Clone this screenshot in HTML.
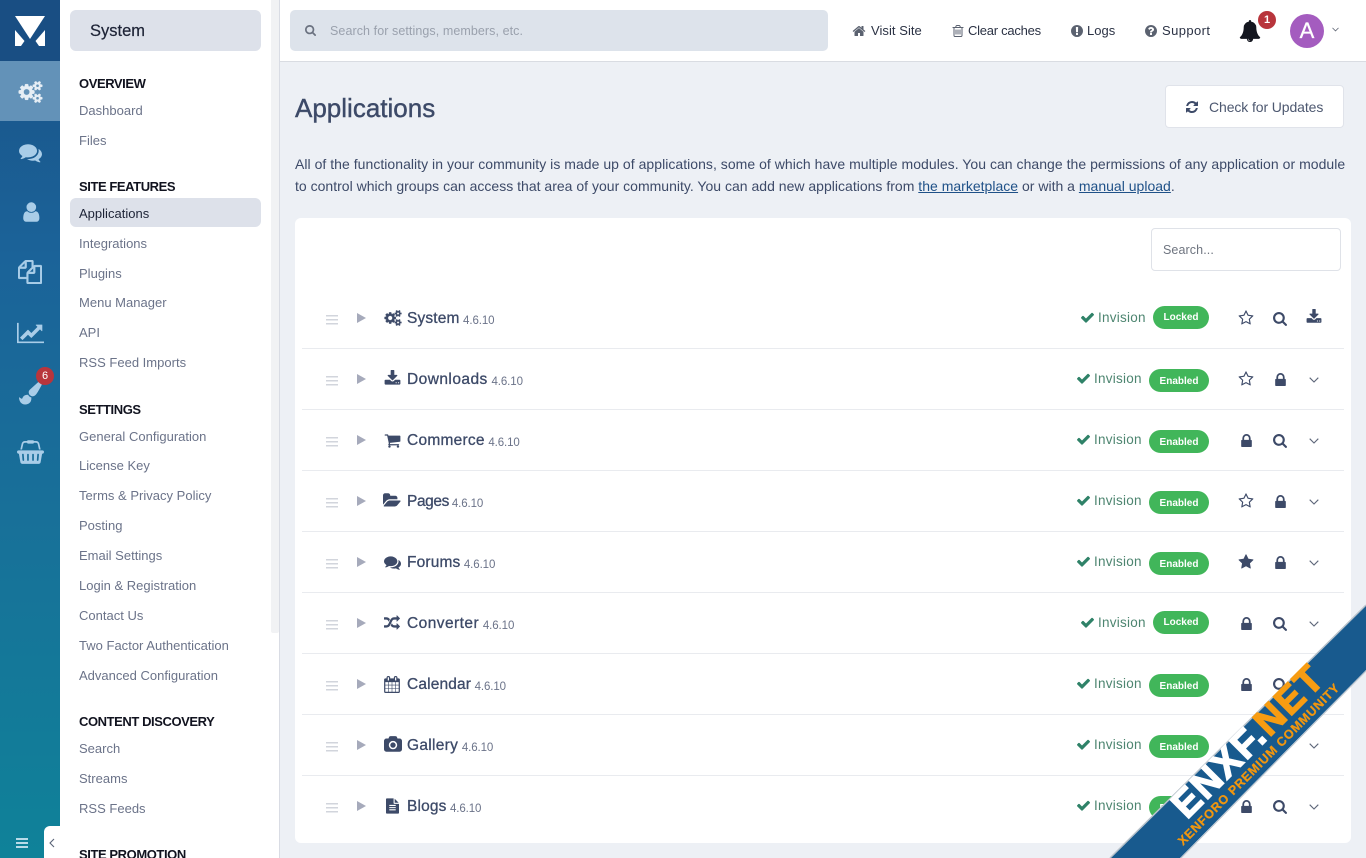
<!DOCTYPE html>
<html lang="en"><head><meta charset="utf-8"><title>Applications</title>
<style>
*{box-sizing:border-box}
html,body{margin:0;padding:0;width:1366px;height:858px;overflow:hidden;background:#edf0f5;font-family:"Liberation Sans",sans-serif;color:#3d4a68}
.a{position:absolute;white-space:nowrap}
#rail{position:absolute;left:0;top:0;width:60px;height:858px;background:linear-gradient(180deg,#1a5287 0,#1b6399 30%,#187099 60%,#0f8299 100%)}
#logo{position:absolute;left:0;top:0;width:60px;height:61px;background:#194e83}
#act{position:absolute;left:0;top:61px;width:60px;height:60px;background:#6392b8}
#side{position:absolute;left:60px;top:0;width:220px;height:858px;background:#fff;border-right:1px solid #d9dce4;overflow:hidden}
.h{position:absolute;left:19px;font-size:13px;line-height:22px;font-weight:bold;color:#11131f;white-space:nowrap;letter-spacing:-.42px}
.l{position:absolute;left:19px;font-size:13px;line-height:20px;color:#6b7389;white-space:nowrap;letter-spacing:.01px}
#top{position:absolute;left:280px;top:0;width:1086px;height:62px;background:#fff;border-bottom:1px solid #d9dce2}
.t{position:absolute;top:21px;font-size:13px;line-height:20px;color:#2b3244;white-space:nowrap}
svg.i{position:absolute;display:block}
#panel{position:absolute;left:295px;top:218px;width:1056px;height:625px;background:#fff;border-radius:6px}
.sep{position:absolute;left:302px;width:1042px;height:1px;background:#e9ebef}
.n{position:absolute;left:407px;font-size:15.5px;line-height:22px;color:#3d4a68;white-space:nowrap;-webkit-text-stroke:.3px #3d4a68;letter-spacing:.15px;word-spacing:-1px}
.n small{font-size:11.5px;color:#6b7389;-webkit-text-stroke:0;letter-spacing:-.1px;position:relative;top:1px}
.v{position:absolute;font-size:13.5px;line-height:20px;color:#4d8570;white-space:nowrap;letter-spacing:.25px}
.p{position:absolute;height:23px;border-radius:12px;background:#41b65a;color:#fff;font-size:10px;font-weight:bold;line-height:23px;text-align:center}
.e{left:1149px;width:60px;padding-top:1px}
.k{left:1153px;width:56px}
a{color:#1f5188}
</style></head><body>
<svg width="0" height="0" style="position:absolute"><defs>
<symbol id="cogs" viewBox="0 0 2048 1792"><path d="M960 896q0-106-75-181t-181-75-181 75-75 181 75 181 181 75 181-75 75-181zm768 512q0-52-38-90t-90-38-90 38-38 90q0 53 37.500 90.500t90.500 37.500 90.500-37.500 37.500-90.500zm0-1024q0-52-38-90t-90-38-90 38-38 90q0 53 37.500 90.500t90.500 37.500 90.500-37.500 37.500-90.500zm-384 421v185q0 10-7 19.500t-16 10.500l-155 24q-11 35-32 76 34 48 90 115 7 11 7 20 0 12-7 19-23 30-82.500 89.500t-78.500 59.500q-11 0-21-7l-115-90q-37 19-77 31-11 108-23 155-7 24-30 24h-186q-11 0-20-7.500t-10-17.500l-23-153q-34-10-75-31l-118 89q-7 7-20 7-11 0-21-8-144-133-144-160 0-9 7-19 10-14 41-53t47-61q-23-44-35-82l-152-24q-10-1-17-9.500t-7-19.500v-185q0-10 7-19.500t16-10.500l155-24q11-35 32-76-34-48-90-115-7-11-7-20 0-12 7-20 22-30 82-89t79-59q11 0 21 7l115 90q34-18 77-32 11-108 23-154 7-24 30-24h186q11 0 20 7.500t10 17.500l23 153q34 10 75 31l118-89q8-7 20-7 11 0 21 8 144 133 144 160 0 8-7 19-12 16-42 54t-45 60q23 48 34 82l152 23q10 2 17 10.500t7 19.500zm640 533v140q0 16-149 31-12 27-30 52 51 113 51 138 0 4-4 7-122 71-124 71-8 0-46-47t-52-68q-20 2-30 2t-30-2q-14 21-52 68t-46 47q-2 0-124-71-4-3-4-7 0-25 51-138-18-25-30-52-149-15-149-31v-140q0-16 149-31 13-29 30-52-51-113-51-138 0-4 4-7 4-2 35-20t59-34 30-16q8 0 46 46.500t52 67.500q20-2 30-2t30 2q51-71 92-112l6-2q4 0 124 70 4 3 4 7 0 25-51 138 17 23 30 52 149 15 149 31zm0-1024v140q0 16-149 31-12 27-30 52 51 113 51 138 0 4-4 7-122 71-124 71-8 0-46-47t-52-68q-20 2-30 2t-30-2q-14 21-52 68t-46 47q-2 0-124-71-4-3-4-7 0-25 51-138-18-25-30-52-149-15-149-31v-140q0-16 149-31 13-29 30-52-51-113-51-138 0-4 4-7 4-2 35-20t59-34 30-16q8 0 46 46.500t52 67.500q20-2 30-2t30 2q51-71 92-112l6-2q4 0 124 70 4 3 4 7 0 25-51 138 17 23 30 52 149 15 149 31z"/></symbol>
<symbol id="comments" viewBox="0 0 1792 1792"><path d="M1408 768q0 139-94 257t-256.500 186.500-353.500 68.500q-86 0-176-16-124 88-278 128-36 9-86 16h-3q-11 0-20.500-8t-11.500-21q-1-3-1-6.500t.5-6.500 2-6l2.500-5 3.500-5.500 4-5 4.500-5 4-4.500q5-6 23-25t26-29.500 22.500-29 25-38.500 20.500-44q-124-72-195-177t-71-224q0-139 94-257t256.500-186.500 353.500-68.500 353.500 68.500 256.500 186.500 94 257zm384 256q0 120-71 224.500t-195 176.500q10 24 20.500 44t25 38.500 22.500 29 26 29.500 23 25q1 1 4 4.500t4.500 5 4 5 3.500 5.500l2.500 5 2 6 .5 6.500-1 6.500q-3 14-13 22t-22 7q-50-7-86-16-154-40-278-128-90 16-176 16-271 0-472-132 58 4 88 4 161 0 309-45t264-129q125-92 192-212t67-254q0-77-23-152 129 71 204 178t75 230z"/></symbol>
<symbol id="user" viewBox="0 0 1664 1792"><path d="M1536 1399q0 109-62.500 187t-150.500 78h-854q-88 0-150.500-78t-62.500-187q0-85 8.500-160.500t31.500-152 58.500-131 94-89 134.500-34.500q131 128 313 128t313-128q76 0 134.500 34.500t94 89 58.500 131 31.500 152 8.500 160.500zm-256-887q0 159-112.500 271.500t-271.500 112.500-271.500-112.500-112.500-271.500 112.500-271.500 271.500-112.500 271.500 112.500 112.500 271.500z"/></symbol>
<symbol id="files" viewBox="0 0 1792 1792"><path d="M1696 384q40 0 68 28t28 68v1216q0 40-28 68t-68 28h-960q-40 0-68-28t-28-68v-288h-544q-40 0-68-28t-28-68v-672q0-40 20-88t48-76l408-408q28-28 76-48t88-20h416q40 0 68 28t28 68v328q68-40 128-40h416zm-544 213l-299 299h299v-299zm-640-384l-299 299h299v-299zm196 647l316-316v-416h-384v416q0 40-28 68t-68 28h-416v640h512v-256q0-40 20-88t48-76zm956 804v-1152h-384v416q0 40-28 68t-68 28h-416v640h896z"/></symbol>
<symbol id="chart" viewBox="0 0 2048 1792"><path d="M2048 1536v128h-2048v-1536h128v1408h1920zm-128-1248v435q0 21-19.500 29.500t-35.500-7.500l-121-121-633 633q-10 10-23 10t-23-10l-233-233-416 416-192-192 585-585q10-10 23-10t23 10l233 233 464-464-121-121q-16-16-7.500-35.500t29.500-19.500h435q14 0 23 9t9 23z"/></symbol>
<symbol id="brush" viewBox="0 0 1792 1792"><path d="M1615 0q70 0 122.500 46.500t52.500 116.500q0 63-45 151-332 629-465 752-97 91-218 91-126 0-216.500-92.500t-90.500-219.500q0-128 92-212l638-579q59-54 130-54zm-909 1034q39 76 106.500 130t150.500 76l1 71q4 213-129.500 347t-348.500 134q-123 0-218-46.500t-152.500-127.500-86.500-183-29-220q7 5 41 30t62 44.500 59 36.500 46 17q41 0 55-37 25-66 57.500-112.500t69.500-76 88-47.500 103-25.500 125-10.500z"/></symbol>
<symbol id="basket" viewBox="0 0 2048 1792"><path d="M1920 768q53 0 90.500 37.500t37.500 90.500-37.500 90.500-90.500 37.500h-15l-115 662q-8 46-44 76t-82 30h-1280q-46 0-82-30t-44-76l-115-662h-15q-53 0-90.500-37.500t-37.500-90.500 37.500-90.500 90.500-37.500h1792zm-1435 800q26-2 43.500-22.500t15.500-46.500l-32-416q-2-26-22.500-43.500t-46.500-15.500-43.500 22.500-15.500 46.500l32 416q2 25 20.500 42t43.500 17h5zm411-64v-416q0-26-19-45t-45-19-45 19-19 45v416q0 26 19 45t45 19 45-19 19-45zm384 0v-416q0-26-19-45t-45-19-45 19-19 45v416q0 26 19 45t45 19 45-19 19-45zm352 5l32-416q2-26-15.500-46.500t-43.500-22.500-46.500 15.500-22.500 43.500l-32 416q-2 26 15.500 46.500t43.500 22.500h5q25 0 43.500-17t20.500-42zm-1156-1217l-93 412h-132l101-441q19-88 89-143.500t160-55.500h167q0-26 19-45t45-19h384q26 0 45 19t19 45h167q90 0 160 55.500t89 143.500l101 441h-132l-93-412q-11-44-45.500-72t-79.500-28h-167q0 26-19 45t-45 19h-384q-26 0-45-19t-19-45h-167q-45 0-79.500 28t-45.500 72z"/></symbol>
<symbol id="search" viewBox="0 0 1664 1664"><path d="M1152 704q0-185-131.500-316.500t-316.500-131.500-316.500 131.500-131.500 316.500 131.500 316.500 316.500 131.500 316.500-131.500 131.500-316.500zm512 832q0 52-38 90t-90 38q-54 0-90-38l-343-342q-179 124-399 124-143 0-273.500-55.500t-225-150-150-225-55.500-273.500 55.500-273.500 150-225 225-150 273.500-55.500 273.500 55.500 225 150 150 225 55.500 273.500q0 220-124 399l343 343q37 37 37 90z"/></symbol>
<symbol id="lock" viewBox="320 128 1152 1408"><path d="M640 768h512v-192q0-106-75-181t-181-75-181 75-75 181v192zm832 96v576q0 40-28 68t-68 28h-960q-40 0-68-28t-28-68v-576q0-40 28-68t68-28h32v-192q0-184 132-316t316-132 316 132 132 316v192h32q40 0 68 28t28 68z"/></symbol>
<symbol id="star" viewBox="0 0 1792 1792"><path d="M1728 647q0 22-26 48l-363 354 86 500q1 7 1 20 0 21-10.500 35.500t-30.500 14.500q-19 0-40-12l-449-236-449 236q-22 12-40 12-21 0-31.500-14.500t-10.500-35.500q0-6 2-20l86-500-364-354q-25-27-25-48 0-37 56-46l502-73 225-455q19-41 49-41t49 41l225 455 502 73q56 9 56 46z"/></symbol>
<symbol id="staro" viewBox="0 0 1792 1792"><path d="M1201 1004l306-297-422-62-189-382-189 382-422 62 306 297-73 421 378-199 377 199zm527-357q0 22-26 48l-363 354 86 500q1 7 1 20 0 50-41 50-19 0-40-12l-449-236-449 236q-22 12-40 12-21 0-31.500-14.500t-10.500-35.500q0-6 2-20l86-500-364-354q-25-27-25-48 0-37 56-46l502-73 225-455q19-41 49-41t49 41l225 455 502 73q56 9 56 46z"/></symbol>
<symbol id="check" viewBox="0 0 1792 1792"><path d="M1671 566q0 40-28 68l-724 724-136 136q-28 28-68 28t-68-28l-136-136-362-362q-28-28-28-68t28-68l136-136q28-28 68-28t68 28l294 295 656-657q28-28 68-28t68 28l136 136q28 28 28 68z"/></symbol>
<symbol id="dl" viewBox="0 0 1792 1792"><path d="M1344 1344q0-26-19-45t-45-19-45 19-19 45 19 45 45 19 45-19 19-45zm256 0q0-26-19-45t-45-19-45 19-19 45 19 45 45 19 45-19 19-45zm128-224v320q0 40-28 68t-68 28h-1472q-40 0-68-28t-28-68v-320q0-40 28-68t68-28h465l135 136q58 56 136 56t136-56l136-136h464q40 0 68 28t28 68zm-325-569q17 41-14 70l-448 448q-18 19-45 19t-45-19l-448-448q-31-29-14-70 17-39 59-39h256v-448q0-26 19-45t45-19h256q26 0 45 19t19 45v448h256q42 0 59 39z"/></symbol>
<symbol id="cart" viewBox="0 0 1792 1792"><path d="M704 1536q0 52-38 90t-90 38-90-38-38-90 38-90 90-38 90 38 38 90zm896 0q0 52-38 90t-90 38-90-38-38-90 38-90 90-38 90 38 38 90zm128-1088v512q0 24-16.500 42.500t-40.500 21.500l-1044 122q13 60 13 70 0 16-24 64h920q26 0 45 19t19 45-19 45-45 19h-1024q-26 0-45-19t-19-45q0-11 8-31.500t16-36 21.500-40 15.500-29.500l-177-823h-204q-26 0-45-19t-19-45 19-45 45-19h256q16 0 28.500 6.500t19.500 15.500 13 24.500 8 26 5.500 29.500 4.500 26h1201q26 0 45 19t19 45z"/></symbol>
<symbol id="folder" viewBox="0 0 1920 1792"><path d="M1879 952q0 31-31 66l-336 396q-43 51-120.500 86.500t-143.500 35.500h-1088q-34 0-60.500-13t-26.500-43q0-31 31-66l336-396q43-51 120.500-86.500t143.500-35.500h1088q34 0 60.500 13t26.500 43zm-343-344v160h-832q-94 0-197 47.500t-164 119.500l-337 396-5 6q0-4-.5-12.500t-.5-12.500v-960q0-92 66-158t158-66h320q92 0 158 66t66 158v32h544q92 0 158 66t66 158z"/></symbol>
<symbol id="random" viewBox="0 0 1792 1792"><path d="M666 481q-60 92-137 273-22-45-37-72.500t-40.500-63.500-51-56.500-63-35-81.500-14.500h-224q-14 0-23-9t-9-23v-192q0-14 9-23t23-9h224q250 0 410 225zm1126 799q0 14-9 23l-320 320q-9 9-23 9-13 0-22.500-9.500t-9.500-22.500v-192q-32 0-85 .5t-81 1-73-1-71-5-64-10.500-63-18.500-58-28.500-59-40-55-53.500-56-69.500q59-93 136-273 22 45 37 72.500t40.500 63.500 51 56.500 63 35 81.500 14.500h256v-192q0-14 9-23t23-9q12 0 24 10l319 319q9 9 9 23zm0-896q0 14-9 23l-320 320q-9 9-23 9-13 0-22.500-9.500t-9.500-22.500v-192h-256q-48 0-87 15t-69 45-51 61.500-45 77.500q-32 62-78 171-29 66-49.500 111t-54 105-64 100-74 83-90 68.500-106.500 42-128 16.500h-224q-14 0-23-9t-9-23v-192q0-14 9-23t23-9h224q48 0 87-15t69-45 51-61.500 45-77.500q32-62 78-171 29-66 49.500-111t54-105 64-100 74-83 90-68.500 106.500-42 128-16.500h256v-192q0-14 9-23t23-9q12 0 24 10l319 319q9 9 9 23z"/></symbol>
<symbol id="cal" viewBox="0 0 1664 1792"><path d="M128 1664h288v-288h-288v288zm352 0h320v-288h-320v288zm-352-352h288v-320h-288v320zm352 0h320v-320h-320v320zm-352-384h288v-288h-288v288zm736 736h320v-288h-320v288zm-384-736h320v-288h-320v288zm768 736h288v-288h-288v288zm-384-352h320v-320h-320v320zm-352-864v-288q0-13-9.500-22.500t-22.500-9.500h-64q-13 0-22.500 9.500t-9.500 22.500v288q0 13 9.500 22.500t22.500 9.500h64q13 0 22.500-9.500t9.500-22.500zm736 864h288v-320h-288v320zm-384-384h320v-288h-320v288zm384 0h288v-288h-288v288zm32-480v-288q0-13-9.500-22.500t-22.500-9.500h-64q-13 0-22.500 9.500t-9.500 22.500v288q0 13 9.500 22.500t22.500 9.500h64q13 0 22.500-9.500t9.500-22.500zm384-64v1280q0 52-38 90t-90 38h-1408q-52 0-90-38t-38-90v-1280q0-52 38-90t90-38h128v-96q0-66 47-113t113-47h64q66 0 113 47t47 113v96h384v-96q0-66 47-113t113-47h64q66 0 113 47t47 113v96h128q52 0 90 38t38 90z"/></symbol>
<symbol id="camera" viewBox="0 0 1920 1792"><path d="M960 672q119 0 203.500 84.500t84.500 203.500-84.500 203.500-203.500 84.500-203.500-84.500-84.500-203.500 84.500-203.500 203.500-84.500zm704-416q106 0 181 75t75 181v896q0 106-75 181t-181 75h-1408q-106 0-181-75t-75-181v-896q0-106 75-181t181-75h224l51-136q19-49 69.500-84.500t103.500-35.500h512q53 0 103.500 35.500t69.500 84.500l51 136h224zm-704 1152q185 0 316.500-131.500t131.500-316.500-131.500-316.500-316.500-131.500-316.500 131.500-131.500 316.500 131.500 316.500 316.500 131.500z"/></symbol>
<symbol id="file" viewBox="128 0 1536 1792"><path d="M1596 476q14 14 28 36h-472v-472q22 14 36 28zm-476 164h544v1056q0 40-28 68t-68 28h-1344q-40 0-68-28t-28-68v-1600q0-40 28-68t68-28h800v544q0 40 28 68t68 28zm160 736v-64q0-14-9-23t-23-9h-704q-14 0-23 9t-9 23v64q0 14 9 23t23 9h704q14 0 23-9t9-23zm0-256v-64q0-14-9-23t-23-9h-704q-14 0-23 9t-9 23v64q0 14 9 23t23 9h704q14 0 23-9t9-23zm0-256v-64q0-14-9-23t-23-9h-704q-14 0-23 9t-9 23v64q0 14 9 23t23 9h704q14 0 23-9t9-23z"/></symbol>
<symbol id="bell" viewBox="0 0 1792 1792"><path d="M912 1696q0-16-16-16-59 0-101.500-42.500t-42.500-101.500q0-16-16-16t-16 16q0 73 51.500 124.500t124.500 51.500q16 0 16-16zm816-288q0 52-38 90t-90 38h-448q0 106-75 181t-181 75-181-75-75-181h-448q-52 0-90-38t-38-90q50-42 91-88t85-119.500 74.500-158.500 50-206 19.500-260q0-152 117-282.500t307-158.500q-8-19-8-39 0-40 28-68t68-28 68 28 28 68q0 20-8 39 190 28 307 158.500t117 282.500q0 139 19.500 260t50 206 74.500 158.500 85 119.500 91 88z"/></symbol>
<symbol id="home" viewBox="0 0 1792 1792"><path d="M1472 992v480q0 26-19 45t-45 19h-384v-384h-256v384h-384q-26 0-45-19t-19-45v-480q0-1 .5-3t.5-3l575-474 575 474q1 2 1 6zm223-69l-62 74q-8 9-21 11h-3q-13 0-21-7l-692-577-692 577q-12 8-24 7-13-2-21-11l-62-74q-8-10-7-23.500t11-21.500l719-599q32-26 76-26t76 26l244 204v-195q0-14 9-23t23-9h192q14 0 23 9t9 23v408l219 182q10 8 11 21.500t-7 23.500z"/></symbol>
<symbol id="trash" viewBox="0 0 1792 1792"><path d="M704 736v576q0 14-9 23t-23 9h-64q-14 0-23-9t-9-23v-576q0-14 9-23t23-9h64q14 0 23 9t9 23zm256 0v576q0 14-9 23t-23 9h-64q-14 0-23-9t-9-23v-576q0-14 9-23t23-9h64q14 0 23 9t9 23zm256 0v576q0 14-9 23t-23 9h-64q-14 0-23-9t-9-23v-576q0-14 9-23t23-9h64q14 0 23 9t9 23zm128 724v-948h-896v948q0 22 7 40.500t14.500 27 10.500 8.500h832q3 0 10.500-8.500t14.500-27 7-40.500zm-672-1076h448l-48-117q-7-9-17-11h-317q-10 2-17 11zm928 32v64q0 14-9 23t-23 9h-96v948q0 83-47 143.500t-113 60.500h-832q-66 0-113-58.500t-47-141.500v-952h-96q-14 0-23-9t-9-23v-64q0-14 9-23t23-9h309l70-167q15-37 54-63t79-26h320q40 0 79 26t54 63l70 167h309q14 0 23 9t9 23z"/></symbol>
<symbol id="excl" viewBox="0 0 1792 1792"><path d="M896 128q209 0 385.500 103t279.500 279.500 103 385.500-103 385.500-279.500 279.500-385.500 103-385.500-103-279.500-279.500-103-385.500 103-385.500 279.500-279.500 385.500-103zm128 1247v-190q0-14-9-23.500t-22-9.500h-192q-13 0-23 10t-10 23v190q0 13 10 23t23 10h192q13 0 22-9.500t9-23.500zm-2-344l18-621q0-12-10-18-10-8-24-8h-220q-14 0-24 8-10 6-10 18l17 621q0 10 10 17.500t24 7.500h185q14 0 23.500-7.500t10.500-17.500z"/></symbol>
<symbol id="quest" viewBox="0 0 1792 1792"><path d="M1024 1376v-192q0-14-9-23t-23-9h-192q-14 0-23 9t-9 23v192q0 14 9 23t23 9h192q14 0 23-9t9-23zm256-672q0-88-55.500-163t-138.500-116-170-41q-243 0-371 213-15 24 8 42l132 100q7 6 19 6 16 0 25-12 53-68 86-92 34-24 86-24 48 0 85.500 26t37.500 59q0 38-20 61t-68 45q-63 28-115.500 86.500t-52.500 125.500v36q0 14 9 23t23 9h192q14 0 23-9t9-23q0-19 21.500-49.500t54.500-49.500q32-18 49-28.500t46-35 44.500-48 28-60.500 12.500-81zm384 192q0 209-103 385.500t-279.500 279.500-385.500 103-385.500-103-279.500-279.500-103-385.500 103-385.500 279.500-279.500 385.500-103 385.500 103 279.500 279.500 103 385.500z"/></symbol>
<symbol id="refresh" viewBox="0 0 1792 1792"><path d="M1639 1056q0 5-1 7-64 268-268 434.500t-478 166.500q-146 0-282.500-55t-243.500-157l-129 129q-19 19-45 19t-45-19-19-45v-448q0-26 19-45t45-19h448q26 0 45 19t19 45-19 45l-137 137q71 66 161 102t187 36q134 0 250-65t186-179q11-17 53-117 8-23 30-23h192q13 0 22.500 9.500t9.500 22.500zm25-800v448q0 26-19 45t-45 19h-448q-26 0-45-19t-19-45 19-45l138-138q-148-137-349-137-134 0-250 65t-186 179q-11 17-53 117-8 23-30 23h-199q-13 0-22.500-9.500t-9.500-22.500v-7q65-268 270-434.500t480-166.500q146 0 284 55.500t245 156.500l130-129q19-19 45-19t45 19 19 45z"/></symbol>
<symbol id="drag" viewBox="0 0 12 10"><path d="M0 0h12v1.500H0zM0 4h12v1.500H0zM0 8h12v1.500H0z"/></symbol>
<symbol id="tri" viewBox="0 0 9 10"><path d="M0 0L9 5 0 10z"/></symbol>
<symbol id="chev" viewBox="0 0 10 6"><path d="M.7.7L5 5 9.300.7" fill="none" stroke="currentColor" stroke-width="1.100"/></symbol>
</defs></svg>

<div id="rail"><div id="logo"></div><div id="act"></div>
<svg class="i" style="left:0;top:0" width="60" height="61"><path fill="#fff" d="M15 16H45L30 39ZM15 30L24.500 41 21 46H15ZM45 30L35.500 41 39 46H45Z"/></svg>
<svg class="i" style="left:18px;top:81px;fill:#e6eef5;stroke:#e6eef5;stroke-width:40" width="25" height="22"><use href="#cogs"/></svg>
<svg class="i" style="left:19px;top:141px;fill:#a9cde8" width="23" height="23"><use href="#comments"/></svg>
<svg class="i" style="left:20px;top:200px;fill:#a9cde8" width="21" height="24"><use href="#user"/></svg>
<svg class="i" style="left:18px;top:260px;fill:#a9cde8;stroke:#a9cde8;stroke-width:35" width="24" height="24"><use href="#files"/></svg>
<svg class="i" style="left:17px;top:321px;fill:#a9cde8" width="27" height="24"><use href="#chart"/></svg>
<svg class="i" style="left:19px;top:381px;fill:#a9cde8" width="23" height="24"><use href="#brush"/></svg>
<div class="a" style="left:36px;top:367px;width:18px;height:18px;border-radius:50%;background:#b8353c;color:#fff;font-size:11px;line-height:18px;text-align:center">6</div>
<svg class="i" style="left:17px;top:440px;fill:#a9cde8" width="27" height="24"><use href="#basket"/></svg>
<svg class="i" style="left:16px;top:838px;fill:#b9dbe8" width="12" height="10"><path d="M0 0h12v2H0zM0 4h12v2H0zM0 8h12v2H0z"/></svg>
<div class="a" style="left:44px;top:826px;width:16px;height:32px;background:#fff;border-radius:6px 0 0 0"></div>
<svg class="i" style="left:49px;top:838px;stroke:#5a6478;fill:none" width="6" height="10"><path d="M5 1L1 5l4 4" stroke-width="1.100"/></svg>
</div>

<div id="side">
<div class="a" style="left:10px;top:10px;width:191px;height:41px;background:#dde1ea;border-radius:6px"></div>
<div class="a" style="left:30px;top:20px;font-size:16.500px;line-height:22px;color:#1d2336;-webkit-text-stroke:.2px #1d2336">System</div>
<div class="h" style="top:73px">OVERVIEW</div>
<div class="l" style="top:101px">Dashboard</div>
<div class="l" style="top:131px">Files</div>
<div class="h" style="top:176px">SITE FEATURES</div>
<div class="a" style="left:10px;top:198px;width:191px;height:29px;background:#dde1ea;border-radius:6px"></div>
<div class="l" style="top:204px;color:#1d2336">Applications</div>
<div class="l" style="top:234px">Integrations</div>
<div class="l" style="top:264px">Plugins</div>
<div class="l" style="top:293px">Menu Manager</div>
<div class="l" style="top:323px">API</div>
<div class="l" style="top:353px">RSS Feed Imports</div>
<div class="h" style="top:399px">SETTINGS</div>
<div class="l" style="top:427px">General Configuration</div>
<div class="l" style="top:456px">License Key</div>
<div class="l" style="top:486px">Terms &amp; Privacy Policy</div>
<div class="l" style="top:516px">Posting</div>
<div class="l" style="top:546px">Email Settings</div>
<div class="l" style="top:576px">Login &amp; Registration</div>
<div class="l" style="top:606px">Contact Us</div>
<div class="l" style="top:636px">Two Factor Authentication</div>
<div class="l" style="top:666px">Advanced Configuration</div>
<div class="h" style="top:711px">CONTENT DISCOVERY</div>
<div class="l" style="top:739px">Search</div>
<div class="l" style="top:769px">Streams</div>
<div class="l" style="top:799px">RSS Feeds</div>
<div class="h" style="top:844px">SITE PROMOTION</div>
<div class="a" style="left:211px;top:0;width:8px;height:633px;background:#f1f2f4;border-radius:0 0 2px 2px"></div>
</div>

<div id="top">
<div class="a" style="left:10px;top:10px;width:538px;height:41px;background:#dde3eb;border-radius:5px"></div>
<svg class="i" style="left:25px;top:25px;fill:#6b7280" width="11" height="11"><use href="#search"/></svg>
<div class="a" style="left:50px;top:21px;font-size:12.500px;line-height:21px;color:#9aa1ad;letter-spacing:.08px">Search for settings, members, etc.</div>
<svg class="i" style="left:572px;top:24px;fill:#5b6270" width="14" height="14"><use href="#home"/></svg>
<div class="t" style="left:591px;letter-spacing:.05px">Visit Site</div>
<svg class="i" style="left:671px;top:24px;fill:#5b6270" width="14" height="14"><use href="#trash"/></svg>
<div class="t" style="left:688px;letter-spacing:-.25px">Clear caches</div>
<svg class="i" style="left:790px;top:24px;fill:#5b6270" width="14" height="14"><use href="#excl"/></svg>
<div class="t" style="left:807px">Logs</div>
<svg class="i" style="left:864px;top:24px;fill:#5b6270" width="14" height="14"><use href="#quest"/></svg>
<div class="t" style="left:882px;letter-spacing:.4px">Support</div>
<svg class="i" style="left:959px;top:20px;fill:#14161f" width="22" height="22"><use href="#bell"/></svg>
<div class="a" style="left:978px;top:11px;width:18px;height:18px;border-radius:50%;background:#b8353c;color:#fff;font-size:11px;font-weight:bold;line-height:18px;text-align:center">1</div>
<div class="a" style="left:1010px;top:14px;width:34px;height:34px;border-radius:50%;background:#a45cbf;color:#fff;font-size:22px;line-height:34px;text-align:center;-webkit-text-stroke:.3px #fff">A</div>
<svg class="i" style="left:1052px;top:27px;color:#5b6270" width="7" height="5"><use href="#chev"/></svg>
</div>

<div class="a" style="left:295px;top:92px;font-size:26px;line-height:32px;color:#3d4a68;-webkit-text-stroke:.4px #3d4a68">Applications</div>
<div class="a" style="left:1165px;top:85px;width:179px;height:43px;background:#fff;border:1px solid #e0e3ea;border-radius:4px"></div>
<svg class="i" style="left:1185px;top:100px;fill:#3d4a68" width="14" height="14"><use href="#refresh"/></svg>
<div class="a" style="left:1209px;top:97px;font-size:14px;line-height:20px;color:#4d5870;letter-spacing:-.1px">Check for Updates</div>
<div class="a" style="left:295px;top:154px;font-size:14px;line-height:20px;color:#3d4a68;letter-spacing:.035px">All of the functionality in your community is made up of applications, some of which have multiple modules. You can change the permissions of any application or module</div>
<div class="a" style="left:295px;top:176px;font-size:14px;line-height:20px;color:#3d4a68;letter-spacing:.01px">to control which groups can access that area of your community. You can add new applications from <a href="#">the marketplace</a> or with a <a href="#">manual upload</a>.</div>

<div id="panel"></div>
<div class="a" style="left:1151px;top:228px;width:190px;height:43px;background:#fff;border:1px solid #dfe2e8;border-radius:4px;font-size:12.500px;line-height:43px;padding-left:11px;color:#6f7580;letter-spacing:.1px">Search...</div>

<div class="sep" style="top:348px"></div><div class="sep" style="top:409px"></div><div class="sep" style="top:470px"></div><div class="sep" style="top:531px"></div><div class="sep" style="top:592px"></div><div class="sep" style="top:653px"></div><div class="sep" style="top:714px"></div><div class="sep" style="top:775px"></div>

<svg class="i" style="left:326px;top:315px;fill:#d2d5dc" width="12" height="10"><use href="#drag"/></svg>
<svg class="i" style="left:326px;top:376px;fill:#d2d5dc" width="12" height="10"><use href="#drag"/></svg>
<svg class="i" style="left:326px;top:437px;fill:#d2d5dc" width="12" height="10"><use href="#drag"/></svg>
<svg class="i" style="left:326px;top:498px;fill:#d2d5dc" width="12" height="10"><use href="#drag"/></svg>
<svg class="i" style="left:326px;top:559px;fill:#d2d5dc" width="12" height="10"><use href="#drag"/></svg>
<svg class="i" style="left:326px;top:620px;fill:#d2d5dc" width="12" height="10"><use href="#drag"/></svg>
<svg class="i" style="left:326px;top:681px;fill:#d2d5dc" width="12" height="10"><use href="#drag"/></svg>
<svg class="i" style="left:326px;top:742px;fill:#d2d5dc" width="12" height="10"><use href="#drag"/></svg>
<svg class="i" style="left:326px;top:803px;fill:#d2d5dc" width="12" height="10"><use href="#drag"/></svg>
<svg class="i" style="left:357px;top:313px;fill:#a6aabb" width="9" height="10"><use href="#tri"/></svg>
<svg class="i" style="left:357px;top:374px;fill:#a6aabb" width="9" height="10"><use href="#tri"/></svg>
<svg class="i" style="left:357px;top:435px;fill:#a6aabb" width="9" height="10"><use href="#tri"/></svg>
<svg class="i" style="left:357px;top:496px;fill:#a6aabb" width="9" height="10"><use href="#tri"/></svg>
<svg class="i" style="left:357px;top:557px;fill:#a6aabb" width="9" height="10"><use href="#tri"/></svg>
<svg class="i" style="left:357px;top:618px;fill:#a6aabb" width="9" height="10"><use href="#tri"/></svg>
<svg class="i" style="left:357px;top:679px;fill:#a6aabb" width="9" height="10"><use href="#tri"/></svg>
<svg class="i" style="left:357px;top:740px;fill:#a6aabb" width="9" height="10"><use href="#tri"/></svg>
<svg class="i" style="left:357px;top:801px;fill:#a6aabb" width="9" height="10"><use href="#tri"/></svg>

<svg class="i" style="left:384px;top:310px;fill:#3d4a68;stroke:#3d4a68;stroke-width:40" width="18" height="16"><use href="#cogs"/></svg>
<svg class="i" style="left:384px;top:370px;fill:#3d4a68" width="17" height="17"><use href="#dl"/></svg>
<svg class="i" style="left:384px;top:432px;fill:#3d4a68" width="17" height="17"><use href="#cart"/></svg>
<svg class="i" style="left:383px;top:492px;fill:#3d4a68" width="18" height="17"><use href="#folder"/></svg>
<svg class="i" style="left:384px;top:554px;fill:#3d4a68" width="17" height="17"><use href="#comments"/></svg>
<svg class="i" style="left:384px;top:615px;fill:#3d4a68" width="16" height="16"><use href="#random"/></svg>
<svg class="i" style="left:384px;top:676px;fill:#3d4a68" width="16" height="17"><use href="#cal"/></svg>
<svg class="i" style="left:384px;top:736px;fill:#3d4a68" width="18" height="17"><use href="#camera"/></svg>
<svg class="i" style="left:386px;top:798px;fill:#3d4a68" width="13" height="16"><use href="#file"/></svg>

<div class="n" style="top:308px">System <small>4.6.10</small></div>
<div class="n" style="top:369px;letter-spacing:.45px">Downloads <small>4.6.10</small></div>
<div class="n" style="top:430px;letter-spacing:.25px">Commerce <small>4.6.10</small></div>
<div class="n" style="top:491px;letter-spacing:-.4px">Pages <small>4.6.10</small></div>
<div class="n" style="top:552px">Forums <small>4.6.10</small></div>
<div class="n" style="top:613px;letter-spacing:.45px">Converter <small>4.6.10</small></div>
<div class="n" style="top:674px">Calendar <small>4.6.10</small></div>
<div class="n" style="top:735px;letter-spacing:.3px">Gallery <small>4.6.10</small></div>
<div class="n" style="top:796px">Blogs <small>4.6.10</small></div>

<svg class="i" style="left:1080px;top:310px;fill:#2f8268" width="15" height="15"><use href="#check"/></svg><div class="v" style="left:1098px;top:308px">Invision</div><div class="p k" style="top:306px">Locked</div>
<svg class="i" style="left:1076px;top:371px;fill:#2f8268" width="15" height="15"><use href="#check"/></svg><div class="v" style="left:1094px;top:369px">Invision</div><div class="p e" style="top:369px">Enabled</div>
<svg class="i" style="left:1076px;top:432px;fill:#2f8268" width="15" height="15"><use href="#check"/></svg><div class="v" style="left:1094px;top:430px">Invision</div><div class="p e" style="top:430px">Enabled</div>
<svg class="i" style="left:1076px;top:493px;fill:#2f8268" width="15" height="15"><use href="#check"/></svg><div class="v" style="left:1094px;top:491px">Invision</div><div class="p e" style="top:491px">Enabled</div>
<svg class="i" style="left:1076px;top:554px;fill:#2f8268" width="15" height="15"><use href="#check"/></svg><div class="v" style="left:1094px;top:552px">Invision</div><div class="p e" style="top:552px">Enabled</div>
<svg class="i" style="left:1080px;top:615px;fill:#2f8268" width="15" height="15"><use href="#check"/></svg><div class="v" style="left:1098px;top:613px">Invision</div><div class="p k" style="top:611px">Locked</div>
<svg class="i" style="left:1076px;top:676px;fill:#2f8268" width="15" height="15"><use href="#check"/></svg><div class="v" style="left:1094px;top:674px">Invision</div><div class="p e" style="top:674px">Enabled</div>
<svg class="i" style="left:1076px;top:737px;fill:#2f8268" width="15" height="15"><use href="#check"/></svg><div class="v" style="left:1094px;top:735px">Invision</div><div class="p e" style="top:735px">Enabled</div>
<svg class="i" style="left:1076px;top:798px;fill:#2f8268" width="15" height="15"><use href="#check"/></svg><div class="v" style="left:1094px;top:796px">Invision</div><div class="p e" style="top:796px">Enabled</div>

<svg class="i" style="left:1238px;top:310px;fill:#3d4a68" width="16" height="16"><use href="#staro"/></svg>
<svg class="i" style="left:1273px;top:312px;fill:#3d4a68" width="14" height="14"><use href="#search"/></svg>
<svg class="i" style="left:1306px;top:309px;fill:#3d4a68" width="16" height="16"><use href="#dl"/></svg>

<svg class="i" style="left:1238px;top:371px;fill:#3d4a68" width="16" height="16"><use href="#staro"/></svg>
<svg class="i" style="left:1275px;top:373px;fill:#3d4a68" width="11" height="13"><use href="#lock"/></svg>
<svg class="i" style="left:1309px;top:377px;color:#5d6679" width="10" height="6"><use href="#chev"/></svg>

<svg class="i" style="left:1241px;top:434px;fill:#3d4a68" width="11" height="13"><use href="#lock"/></svg>
<svg class="i" style="left:1273px;top:434px;fill:#3d4a68" width="14" height="14"><use href="#search"/></svg>
<svg class="i" style="left:1309px;top:438px;color:#5d6679" width="10" height="6"><use href="#chev"/></svg>

<svg class="i" style="left:1238px;top:493px;fill:#3d4a68" width="16" height="16"><use href="#staro"/></svg>
<svg class="i" style="left:1275px;top:495px;fill:#3d4a68" width="11" height="13"><use href="#lock"/></svg>
<svg class="i" style="left:1309px;top:499px;color:#5d6679" width="10" height="6"><use href="#chev"/></svg>

<svg class="i" style="left:1238px;top:554px;fill:#3d4a68" width="16" height="16"><use href="#star"/></svg>
<svg class="i" style="left:1275px;top:556px;fill:#3d4a68" width="11" height="13"><use href="#lock"/></svg>
<svg class="i" style="left:1309px;top:560px;color:#5d6679" width="10" height="6"><use href="#chev"/></svg>

<svg class="i" style="left:1241px;top:617px;fill:#3d4a68" width="11" height="13"><use href="#lock"/></svg>
<svg class="i" style="left:1273px;top:617px;fill:#3d4a68" width="14" height="14"><use href="#search"/></svg>
<svg class="i" style="left:1309px;top:621px;color:#5d6679" width="10" height="6"><use href="#chev"/></svg>

<svg class="i" style="left:1241px;top:678px;fill:#3d4a68" width="11" height="13"><use href="#lock"/></svg>
<svg class="i" style="left:1273px;top:678px;fill:#3d4a68" width="14" height="14"><use href="#search"/></svg>

<svg class="i" style="left:1309px;top:743px;color:#5d6679" width="10" height="6"><use href="#chev"/></svg>

<svg class="i" style="left:1241px;top:800px;fill:#3d4a68" width="11" height="13"><use href="#lock"/></svg>
<svg class="i" style="left:1273px;top:800px;fill:#3d4a68" width="14" height="14"><use href="#search"/></svg>
<svg class="i" style="left:1309px;top:804px;color:#5d6679" width="10" height="6"><use href="#chev"/></svg>

<svg class="i" style="left:0;top:0" width="1366" height="858">
<polygon points="1366,605 1366,670 1180,858 1110,858" fill="#185a8e"/>
<polyline points="1110,858 1366,605" fill="none" stroke="#b9c3cc" stroke-width="1.500"/>
<polyline points="1181,858 1366,671" fill="none" stroke="#b9c3cc" stroke-width="1"/>
<g transform="translate(1187,820) rotate(-45)" font-family="'Liberation Sans',sans-serif" font-weight="bold">
<text x="0" y="0" font-size="38" textLength="196" lengthAdjust="spacing" stroke-width="1.500"><tspan fill="#fff" stroke="#fff">ENXF.</tspan><tspan fill="#f79c12" stroke="#f79c12">NET</tspan></text>
</g>
<g transform="translate(1183,846) rotate(-45)" font-family="'Liberation Sans',sans-serif" font-weight="bold">
<text x="0" y="0" font-size="12.500" fill="#f0960f" stroke="#f0960f" stroke-width=".3" textLength="222" lengthAdjust="spacing">XENFORO PREMIUM COMMUNITY</text>
</g>
</svg>
</body></html>
